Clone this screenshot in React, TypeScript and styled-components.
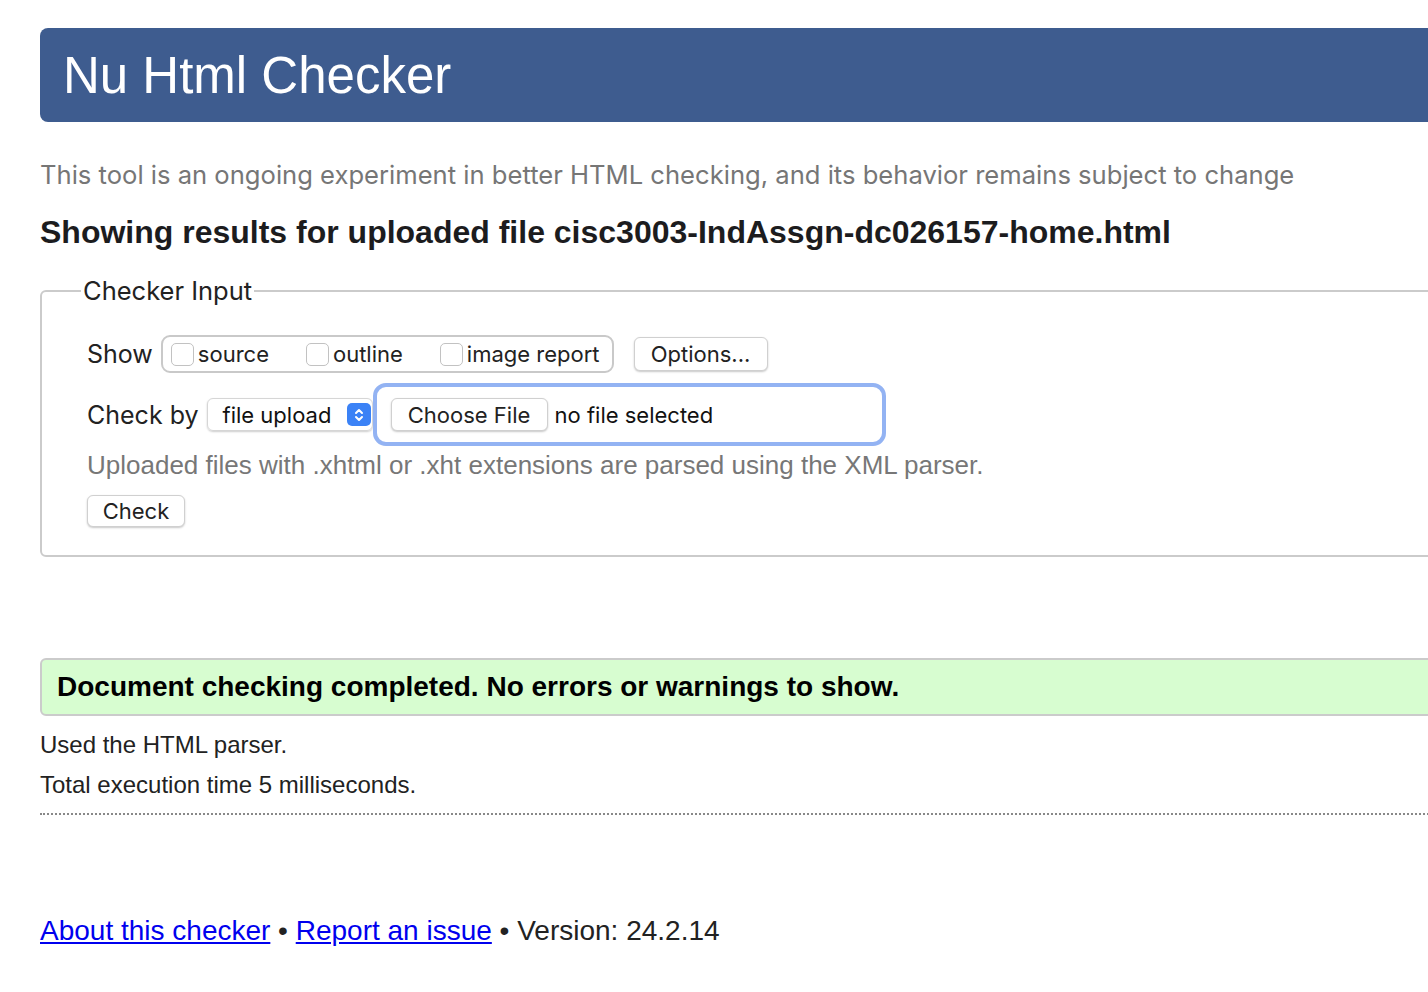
import React from "react";
import styled, { createGlobalStyle } from "styled-components";

const GlobalStyle = createGlobalStyle`
  html, body {
    margin: 0;
    padding: 0;
    background: #fff;
    overflow: hidden;
  }
  body {
    font-family: "Liberation Sans", Arial, sans-serif;
    color: #222;
  }
`;

const sysFont = `Inter, "Noto Sans", sans-serif`;

const Page = styled.div`
  padding: 28px 0 40px 40px;
  width: calc(100vw + 40px);
  box-sizing: border-box;
`;

const Header = styled.h1`
  margin: 0;
  height: 94px;
  display: flex;
  align-items: center;
  padding-left: 23px;
  background: #3e5c8f;
  color: #fff;
  font-weight: 400;
  font-size: 51px;
  border-radius: 8px 0 0 8px;
`;

const Intro = styled.p`
  margin: 38px 0 0;
  font-family: ${sysFont};
  font-size: 25.6px;
  line-height: 30px;
  color: #767676;
`;

const Heading = styled.h2`
  margin: 23px 0 0;
  font-size: 32px;
  line-height: 38px;
  font-weight: 700;
  color: #1c1c1e;
`;

const Fieldset = styled.fieldset`
  margin: 24px 0 0;
  padding: 29px 0 28px 45px;
  border: 2px solid #cbcbcb;
  border-radius: 6px;
`;

const Legend = styled.legend`
  margin-left: -6px;
  padding: 0 2px;
  font-family: ${sysFont};
  font-size: 25.5px;
  color: #222;
`;

const Row = styled.div<{ gap?: number }>`
  display: flex;
  align-items: center;
  font-family: ${sysFont};
  margin-bottom: ${(p) => p.gap ?? 0}px;
`;

const Label = styled.span`
  font-size: 25px;
  color: #222;
  margin-right: 8px;
`;

const CheckGroup = styled.div`
  display: flex;
  align-items: center;
  height: 34px;
  padding: 0 12px 0 8px;
  border: 2px solid #c9c9c9;
  border-radius: 9px;
`;

const CheckItem = styled.label<{ last?: boolean }>`
  display: flex;
  align-items: center;
  font-size: 22px;
  color: #222;
  margin-right: ${(p) => (p.last ? 0 : 37)}px;
`;

const Box = styled.span`
  width: 23px;
  height: 23px;
  border: 1px solid #c2c2c2;
  border-radius: 5px;
  margin-right: 4px;
  box-sizing: border-box;
  background: #fff;
`;

const Button = styled.button<{ w: number; h?: number }>`
  appearance: none;
  width: ${(p) => p.w}px;
  height: ${(p) => p.h ?? 33}px;
  border: 0.5px solid #d0d0d0;
  border-radius: 6px;
  background: #fff;
  box-shadow: 0 1px 2px rgba(0, 0, 0, 0.22);
  font-family: ${sysFont};
  font-size: 22px;
  color: #222;
  padding: 0;
`;

const OptionsButton = styled(Button)`
  margin-left: 20px;
`;

const Select = styled.div`
  display: flex;
  align-items: center;
  justify-content: space-between;
  width: 166px;
  height: 33px;
  box-sizing: border-box;
  padding: 0 1px 0 15px;
  border: 0.5px solid #d6d6d6;
  border-radius: 6px;
  box-shadow: 0 1px 2px rgba(0, 0, 0, 0.2);
  font-size: 22px;
  color: #111;
`;

const Chevron = styled.span`
  display: flex;
  align-items: center;
  justify-content: center;
  width: 24px;
  height: 23px;
  border-radius: 5px;
  background: #3b82f6;
`;

const FileFocus = styled.div`
  display: flex;
  align-items: center;
  width: 513px;
  height: 63px;
  box-sizing: border-box;
  padding-left: 14px;
  border: 4px solid #93b3f3;
  border-radius: 13px;
  font-size: 22px;
  color: #111;
  gap: 7px;
`;

const Hint = styled.p`
  margin: 4px 0 15px;
  font-size: 26px;
  line-height: 30px;
  color: #777;
`;

const Result = styled.div`
  margin-top: 101px;
  height: 58px;
  box-sizing: border-box;
  display: flex;
  align-items: center;
  padding-left: 15px;
  background: #d7fdd0;
  border: 2px solid #cbcbcb;
  border-radius: 6px;
  font-size: 28px;
  font-weight: 700;
  color: #000;
`;

const Note = styled.p`
  margin: 0;
  font-size: 24px;
  line-height: 40px;
  color: #222;
`;

const Details = styled.div`
  margin-top: 9px;
  padding-bottom: 8px;
  border-bottom: 2px dotted #888;
`;

const Footer = styled.p`
  margin: 100px 0 0;
  font-size: 28px;
  color: #222;
  a {
    color: #0000ee;
    text-decoration: underline;
  }
`;

const Arrows = () => (
  <svg width="12" height="16" viewBox="0 0 12 16" fill="none" stroke="#fff" strokeWidth="2" strokeLinecap="round" strokeLinejoin="round">
    <path d="M3 6l3-3 3 3" />
    <path d="M3 10l3 3 3-3" />
  </svg>
);

export default function App() {
  return (
    <>
      <GlobalStyle />
      <Page>
        <Header>Nu Html Checker</Header>
        <Intro>
          This tool is an ongoing experiment in better HTML checking, and its behavior remains subject to change
        </Intro>
        <Heading>Showing results for uploaded file cisc3003-IndAssgn-dc026157-home.html</Heading>
        <Fieldset>
          <Legend>Checker Input</Legend>
          <Row gap={10}>
            <Label>Show</Label>
            <CheckGroup>
              <CheckItem>
                <Box />
                source
              </CheckItem>
              <CheckItem>
                <Box />
                outline
              </CheckItem>
              <CheckItem last>
                <Box />
                image report
              </CheckItem>
            </CheckGroup>
            <OptionsButton w={134} h={34}>Options...</OptionsButton>
          </Row>
          <Row>
            <Label>Check by</Label>
            <Select>
              file upload
              <Chevron>
                <Arrows />
              </Chevron>
            </Select>
            <FileFocus>
              <Button w={157}>Choose File</Button>
              no file selected
            </FileFocus>
          </Row>
          <Hint>Uploaded files with .xhtml or .xht extensions are parsed using the XML parser.</Hint>
          <Button w={98} h={32}>Check</Button>
        </Fieldset>
        <Result>Document checking completed. No errors or warnings to show.</Result>
        <Details>
          <Note>Used the HTML parser.</Note>
          <Note>Total execution time 5 milliseconds.</Note>
        </Details>
        <Footer>
          <a href="#about">About this checker</a> • <a href="#issue">Report an issue</a> • Version: 24.2.14
        </Footer>
      </Page>
    </>
  );
}
